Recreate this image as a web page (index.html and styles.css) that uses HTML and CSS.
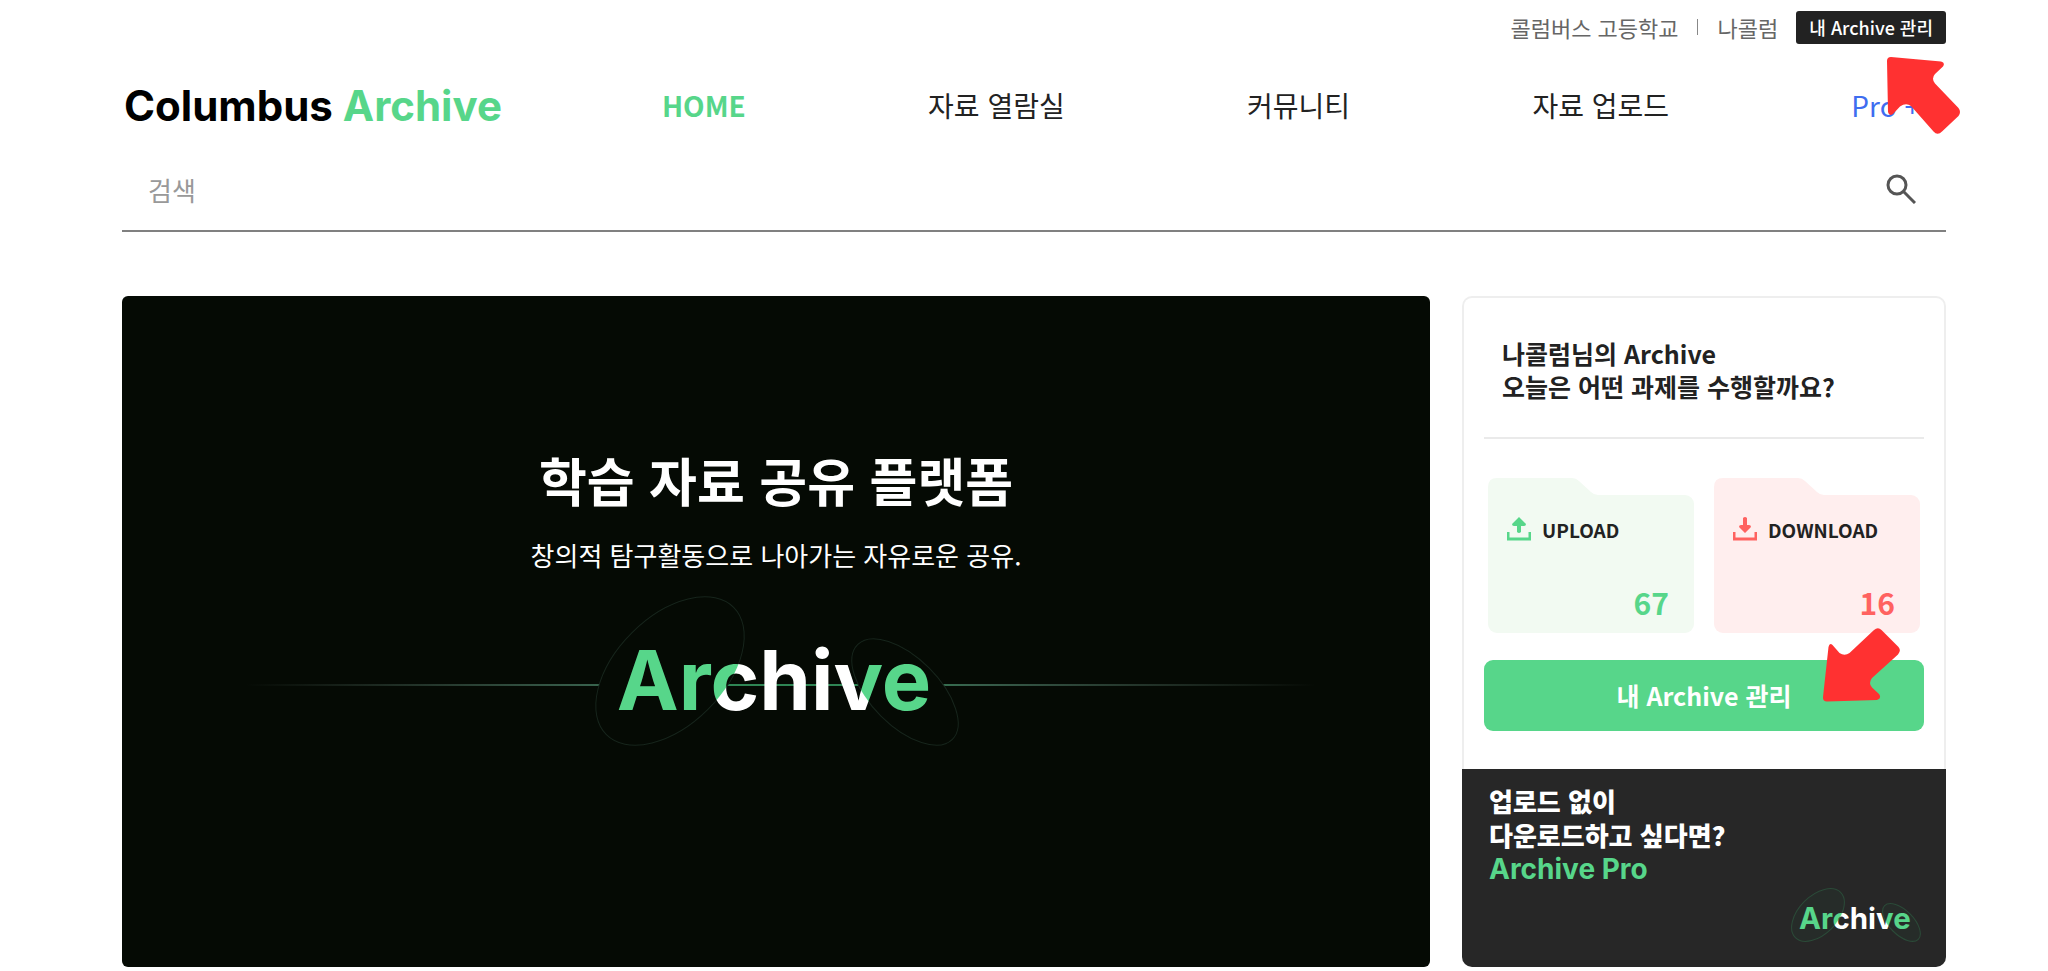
FILE: index.html
```html
<!DOCTYPE html>
<html lang="ko">
  <head>
    <meta charset="utf-8">
    <meta name="viewport" content="width=device-width, initial-scale=1.0">
    <title>Columbus Archive</title>
    <link rel="stylesheet" href="styles.css">
  </head>
  <body>
    <div class="page">
      <div class="topbar">
        <span>콜럼버스 고등학교</span>
        <span class="divider"></span>
        <span class="user">나콜럼</span>
        <div class="manage">
          <a href="#" class="manage-link">내 Archive 관리</a>
          <svg class="arrow arrow-top" width="75" height="79" viewBox="1886 56 75 79" aria-hidden="true">
            <path d="M1887 61Q1887 57 1891 57L1941 61.500Q1945.500 62.500 1943 66.500L1935 74Q1931 78.500 1935 83.500L1958.500 108Q1961.500 112 1958.500 116L1942 131.500Q1937.500 136 1933.500 131.500L1911 106Q1906 102.500 1900 106.500L1893 114Q1889 116.500 1888 112Z"/>
          </svg>
        </div>
      </div>

      <header class="header">
        <a href="#" class="logo">Columbus <span>Archive</span></a>
        <nav class="nav">
          <a href="#" class="active">HOME</a>
          <a href="#">자료 열람실</a>
          <a href="#">커뮤니티</a>
          <a href="#">자료 업로드</a>
          <a href="#" class="pro">Pro +</a>
        </nav>
      </header>

      <form class="search">
        <input type="text" placeholder="검색" aria-label="검색">
        <button type="button" aria-label="검색">
          <svg width="30" height="30" viewBox="0 0 30 30" fill="none" stroke="#555" stroke-width="3">
            <circle cx="11" cy="11" r="9"/>
            <path d="M17 17l12 12"/>
          </svg>
        </button>
      </form>

      <main class="main">
        <section class="hero">
          <h1>학습 자료 공유 플랫폼</h1>
          <p>창의적 탐구활동으로 나아가는 자유로운 공유.</p>
          <svg class="hero-art" viewBox="0 0 1100 160" role="img" aria-label="Archive">
            <defs>
              <linearGradient id="fade" gradientUnits="userSpaceOnUse" x1="20" x2="1090" y1="0" y2="0">
                <stop offset="0" stop-color="#4a5a52" stop-opacity="0"/>
                <stop offset=".32" stop-color="#38604c"/>
                <stop offset=".4" stop-color="#2f8554"/>
                <stop offset=".6" stop-color="#2f8554"/>
                <stop offset=".68" stop-color="#38604c"/>
                <stop offset="1" stop-color="#4a5a52" stop-opacity="0"/>
              </linearGradient>
              <!-- white lettering, green where the ellipses overlap it -->
              <pattern id="ink" patternUnits="userSpaceOnUse" width="1100" height="160">
                <rect width="1100" height="160" fill="#fff"/>
                <ellipse cx="444" cy="81" rx="90" ry="54" transform="rotate(-45 444 81)" fill="#57d68a"/>
                <ellipse cx="679" cy="102" rx="67" ry="34" transform="rotate(45 679 102)" fill="#57d68a"/>
              </pattern>
            </defs>
            <rect x="20" y="94" width="1070" height="2" fill="url(#fade)"/>
            <g class="orbits">
              <ellipse cx="444" cy="81" rx="90" ry="54" transform="rotate(-45 444 81)"/>
              <ellipse cx="679" cy="102" rx="67" ry="34" transform="rotate(45 679 102)"/>
            </g>
            <text x="548" y="120" text-anchor="middle" class="wordmark" fill="url(#ink)">Archive</text>
          </svg>
        </section>

        <aside class="side">
          <div class="panel">
            <h2>나콜럼님의 Archive<br>오늘은 어떤 과제를 수행할까요?</h2>
            <div class="folders">
              <div class="folder upload">
                <div class="tab"><svg width="110" height="17" viewBox="0 0 110 17"><path d="M0 17V9Q0 0 9 0H84Q88 0 91 3L103 14Q106 17 110 17Z"/></svg></div>
                <div class="folder-body">
                  <div class="label">
                    <svg width="24" height="24" viewBox="0 0 24 24" aria-hidden="true">
                      <path d="M1 15v7h22v-7" fill="none" stroke="currentColor" stroke-width="3"/>
                      <path d="M12 0l7 7q0 2-2 2h-3v6q-2 2-4 0V9H7Q5 9 5 7Z" fill="currentColor"/>
                    </svg>
                    <span>UPLOAD</span>
                  </div>
                  <strong>67</strong>
                </div>
              </div>
              <div class="folder download">
                <div class="tab"><svg width="110" height="17" viewBox="0 0 110 17"><path d="M0 17V9Q0 0 9 0H84Q88 0 91 3L103 14Q106 17 110 17Z"/></svg></div>
                <div class="folder-body">
                  <div class="label">
                    <svg width="24" height="24" viewBox="0 0 24 24" aria-hidden="true">
                      <path d="M1 15v7h22v-7" fill="none" stroke="currentColor" stroke-width="3"/>
                      <path d="M12 16l6-6q0-2-2-2h-2V1q-2-2-4 0v7H8Q6 8 6 10Z" fill="currentColor"/>
                    </svg>
                    <span>DOWNLOAD</span>
                  </div>
                  <strong>16</strong>
                </div>
              </div>
            </div>
            <div class="action">
              <button type="button">내 Archive 관리</button>
              <svg class="arrow arrow-action" width="79" height="76" viewBox="1822 627 79 76" aria-hidden="true">
                <path d="M1823 697Q1822.500 701.500 1827 701.500L1877 700Q1882 698.500 1879 694L1872 687.500Q1868 683 1872 678L1898 654.500Q1901.500 650.500 1898.500 647L1881.500 630Q1878 626.500 1874 630L1849.500 653Q1844.500 656.500 1839.500 653L1832.500 645Q1829.500 642.500 1828.500 647Z"/>
              </svg>
            </div>
          </div>
          <a href="#" class="banner">
            <span>업로드 없이</span>
            <span>다운로드하고 싶다면?</span>
            <span class="banner-pro">Archive Pro</span>
            <svg class="banner-logo" viewBox="368 5 366 152" role="img" aria-label="Archive">
              <g class="orbits">
                <ellipse cx="444" cy="81" rx="90" ry="54" transform="rotate(-45 444 81)"/>
                <ellipse cx="679" cy="102" rx="67" ry="34" transform="rotate(45 679 102)"/>
              </g>
              <text x="548" y="120" text-anchor="middle" class="wordmark" fill="url(#ink)">Archive</text>
            </svg>
          </a>
        </aside>
      </main>
    </div>
  </body>
</html>
```
FILE: styles.css
```css
* {
  box-sizing: border-box;
}
body {
  margin: 0;
  background: #fff;
  color: #222;
  font-family: "Noto Sans CJK KR", sans-serif;
}
a {
  color: inherit;
  text-decoration: none;
}
button, input {
  font-family: inherit;
  border: none;
  background: none;
  padding: 0;
}
svg {
  display: block;
}
h1, h2, p {
  margin: 0;
}
.page {
  padding: 11px 102px 4px 122px;
}

.topbar {
  display: flex;
  justify-content: flex-end;
  align-items: center;
  height: 33px;
  font-size: 22px;
  line-height: 30px;
  color: #666;
}
.topbar > span {
  margin-bottom: 2px;
}
.topbar .divider {
  width: 1px;
  height: 16px;
  margin: 0 20px 2px 18px;
  background: #888;
}
.manage {
  position: relative;
  margin-left: 18px;
}
.manage-link {
  display: block;
  padding: 0 13px;
  border-radius: 3px;
  background: #222;
  color: #fff;
  font-size: 18px;
  font-weight: 500;
  line-height: 33px;
}
.arrow {
  position: absolute;
  fill: #ff3131;
  pointer-events: none;
}
.arrow-top {
  top: 45px;
  right: -15px;
}
.arrow-action {
  top: -33px;
  right: 23px;
}

.header {
  display: flex;
  align-items: center;
  height: 72px;
  margin: 25px 0 11px;
}
.logo {
  padding-left: 2px;
  font-family: Inter, sans-serif;
  font-size: 42px;
  font-weight: 700;
  color: #000;
  white-space: nowrap;
}
.logo span {
  color: #57d68a;
}
.nav {
  flex: 1;
  display: flex;
  justify-content: space-between;
  margin-left: 160px;
  padding-right: 26px;
  font-size: 28px;
  white-space: nowrap;
}
.nav .active {
  color: #57d68a;
  font-weight: 700;
}
.nav .pro {
  color: #3f6df0;
}

.search {
  display: flex;
  align-items: center;
  height: 80px;
  padding: 0 30px 4px 26px;
  border-bottom: 2px solid #808080;
}
.search input {
  flex: 1;
  height: 60px;
  font-size: 26px;
  outline: none;
}
.search input::placeholder {
  color: #999;
}

.main {
  display: grid;
  grid-template-columns: 1308fr 484fr;
  gap: 32px;
  margin-top: 64px;
}
.hero {
  display: flex;
  flex-direction: column;
  align-items: center;
  padding: 149px 24px 0;
  border-radius: 6px;
  background: #050a04;
  color: #fff;
  text-align: center;
}
.hero h1 {
  font-size: 52px;
  font-weight: 700;
  line-height: 70px;
}
.hero p {
  margin-top: 20px;
  font-size: 26px;
  font-weight: 400;
  line-height: 40px;
}
.hero-art {
  width: 100%;
  max-width: 1100px;
  margin-top: 15px;
}
.wordmark {
  font-family: Inter, sans-serif;
  font-size: 83px;
  font-weight: 700;
}
.hero .orbits {
  fill: #050a04;
  stroke: #17251c;
}

.side {
  display: flex;
  flex-direction: column;
}
.panel {
  padding: 39px 20px 38px;
  border: 2px solid #eee;
  border-bottom: none;
  border-radius: 10px 10px 0 0;
}
.panel h2 {
  padding: 0 18px 34px;
  border-bottom: 2px solid #eaeaea;
  font-size: 25px;
  font-weight: 700;
  line-height: 33px;
}
.folders {
  display: grid;
  grid-template-columns: 1fr 1fr;
  gap: 20px;
  margin: 39px 4px 27px;
}
.upload {
  --paper: #f2faf2;
  --accent: #57d68a;
}
.download {
  --paper: #ffeeee;
  --accent: #ff6260;
}
.tab {
  fill: var(--paper);
}
.folder-body {
  display: flex;
  flex-direction: column;
  justify-content: space-between;
  height: 138px;
  padding: 21px 25px 11px 19px;
  border-radius: 0 9px 9px 9px;
  background: var(--paper);
}
.label {
  display: flex;
  align-items: center;
  gap: 11px;
  font-size: 19px;
  font-weight: 700;
  line-height: 28px;
}
.label svg, .folder strong {
  color: var(--accent);
}
.label svg {
  margin-bottom: 2px;
}
.folder strong {
  font-size: 30px;
  font-weight: 700;
  line-height: 40px;
  text-align: right;
}
.action {
  position: relative;
}
.action button {
  width: 100%;
  height: 71px;
  padding-bottom: 2px;
  border-radius: 9px;
  background: #57d68a;
  color: #fff;
  font-size: 25px;
  font-weight: 700;
}
.banner {
  flex: 1;
  display: flex;
  flex-direction: column;
  padding: 15px 25px 25px 27px;
  border-radius: 0 0 10px 10px;
  background: #272727;
  color: #fff;
  font-size: 26px;
  font-weight: 900;
  line-height: 34px;
}
.banner-pro {
  font-family: Inter, sans-serif;
  font-size: 28px;
  font-weight: 700;
  color: #57d68a;
}
.banner-logo {
  width: 130px;
  height: 54px;
  margin-top: 2px;
  align-self: flex-end;
}
.banner .orbits {
  fill: #262c29;
  stroke: #2b4a38;
  stroke-width: 3px;
}
```
